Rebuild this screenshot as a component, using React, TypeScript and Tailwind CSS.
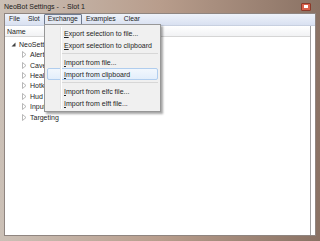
import React from 'react';

const font = { fontFamily: '"Segoe UI", "Liberation Sans", Arial, sans-serif' };

function Arrow({ open }: { open?: boolean }) {
  if (open) {
    return (
      <svg width="5" height="5" viewBox="0 0 5 5" className="shrink-0">
        <path d="M4.5 0.5 L4.5 4.5 L0.5 4.5 Z" fill="#404040" />
      </svg>
    );
  }
  return (
    <svg width="5" height="7" viewBox="0 0 5 7" className="shrink-0">
      <path d="M0.5 0.5 L4 3.5 L0.5 6.5 Z" fill="none" stroke="#a6a6a6" strokeWidth="0.8" />
    </svg>
  );
}

const children = ['Alerts', 'Cave', 'Healer', 'Hotkeys', 'Hud', 'Input', 'Targeting'];

function MenuItem({ label, hot }: { label: string; hot?: boolean }) {
  return (
    <div
      className={
        'h-[12px] mx-[2px] flex items-center pl-[16px] border rounded-[2px] ' +
        (hot ? 'border-[#b0cdee] bg-gradient-to-b from-[#f2f7fd] to-[#e3eefb]' : 'border-transparent')
      }
    >
      <span className="text-[7px] text-[#1e1e1e] leading-none whitespace-nowrap">
        <span className="underline">{label[0]}</span>
        {label.slice(1)}
      </span>
    </div>
  );
}

function Sep() {
  return (
    <div className="h-[5px] ml-[17px] mr-[2px] flex items-center">
      <div className="h-px w-full bg-[#d7d7d7]" />
    </div>
  );
}

export default function App() {
  return (
    <div
      className="relative w-[320px] h-[241px] overflow-hidden flex flex-col bg-gradient-to-r from-[#cbc0b6] via-[#b89d8c] to-[#8a7264]"
      style={font}
    >
      {/* title bar */}
      <div className="h-[13px] flex items-center pl-[4px] pr-[9px] shrink-0">
        <span className="text-[7px] text-[#1a1a1a] leading-none whitespace-pre">NeoBot Settings -  - Slot 1</span>
        <div className="ml-auto w-[10px] h-[8px] rounded-[1px] bg-[#d8604a] border border-[#8a3a2a] flex items-center justify-center">
          <div className="w-[4px] h-[3px] bg-white" />
        </div>
      </div>

      {/* client */}
      <div className="flex-1 mx-[4px] mb-[5px] flex flex-col bg-white border border-[#8f8580]">
        {/* menu bar */}
        <div className="h-[12px] shrink-0 flex items-center bg-gradient-to-b from-[#eef2fa] to-[#d9e1f1] border-b border-[#c8d0e0]">
          {['File', 'Slot', 'Exchange', 'Examples', 'Clear'].map((m) => (
            <div
              key={m}
              className={
                'h-[11px] px-[3px] flex items-center border rounded-[1px] ' +
                (m === 'Exchange' ? 'border-[#6e7a90] bg-[#e4e9f3]' : 'border-transparent')
              }
            >
              <span className="text-[6.8px] text-[#1e1e1e] leading-none">{m}</span>
            </div>
          ))}
        </div>

        {/* list */}
        <div className="flex-1 flex flex-col mr-[4px] border-r border-[#a0a0a0]">
          <div className="h-[11px] shrink-0 flex items-center pl-[2px] bg-gradient-to-b from-white to-[#f1f2f4] border-b border-[#d5d5d5]">
            <span className="text-[7px] text-[#1e1e1e] leading-none">Name</span>
          </div>
          <div className="flex flex-col pt-[2px]">
            <div className="h-[10.5px] flex items-center gap-[3px] pl-[6px]">
              <Arrow open />
              <span className="text-[7px] text-[#1e1e1e] leading-none">NeoSettings</span>
            </div>
            {children.map((c) => (
              <div key={c} className="h-[10.4px] flex items-center gap-[3px] pl-[17px]">
                <Arrow />
                <span className="text-[7px] text-[#1e1e1e] leading-none">{c}</span>
              </div>
            ))}
          </div>
        </div>
      </div>

      {/* dropdown */}
      <div className="absolute left-[44px] top-[24px] w-[117px] py-[2px] bg-[#f0f0f0] border border-[#979797] shadow-[2px_2px_2px_rgba(0,0,0,0.35)]">
        <div className="absolute left-[15px] top-[2px] bottom-[2px] w-px bg-[#e2e2e2]" />
        <div className="absolute left-[16px] top-[2px] bottom-[2px] w-px bg-white" />
        <MenuItem label="Export selection to file..." />
        <MenuItem label="Export selection to clipboard" />
        <Sep />
        <MenuItem label="Import from file..." />
        <MenuItem label="Import from clipboard" hot />
        <Sep />
        <MenuItem label="Import from elfc file..." />
        <MenuItem label="Import from elft file..." />
      </div>
    </div>
  );
}
